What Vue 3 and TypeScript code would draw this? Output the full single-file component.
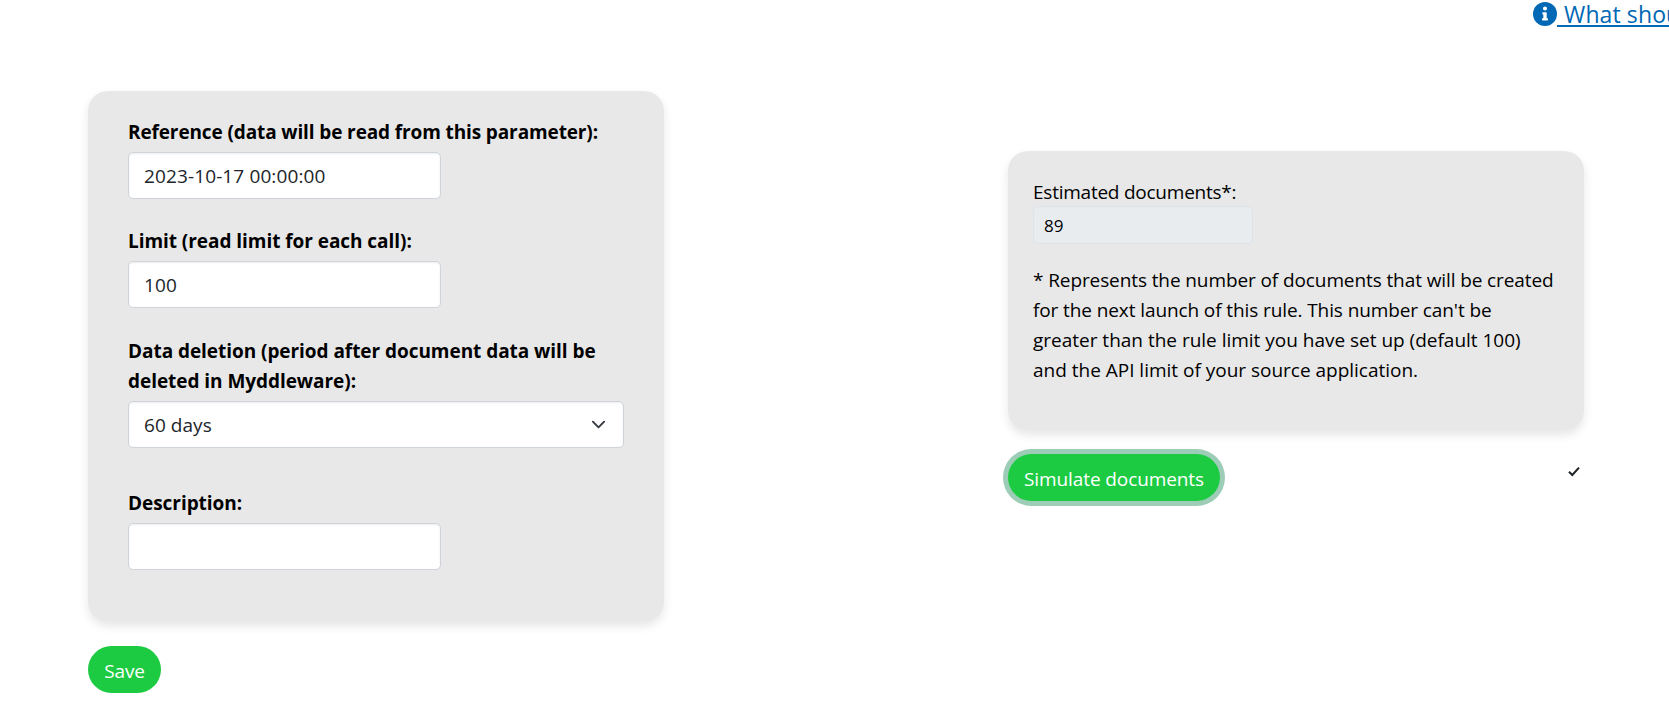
<script setup lang="ts">
import { ref } from 'vue'

const reference = ref('2023-10-17 00:00:00')
const limit = ref('100')
const period = ref('60 days')
const description = ref('')
const estimated = ref('89')
</script>

<template>
  <div class="page">
    <header class="help">
      <svg class="info" viewBox="0 0 512 512">
        <circle cx="256" cy="256" r="256" fill="#0068b4" />
        <path fill="#fff" d="M256 96a43 43 0 1 1 0 86 43 43 0 0 1 0-86zM200 230c0-7 5-12 12-12h68c7 0 12 5 12 12v114h16c7 0 12 5 12 12v24c0 7-5 12-12 12H204c-7 0-12-5-12-12v-24c0-7 5-12 12-12h16v-78h-8c-7 0-12-5-12-12z" />
      </svg>
      <a class="help-link"><span>&nbsp;What should</span></a>
    </header>
    <main class="columns">
      <section class="column">
        <form class="card params">
          <div class="field">
            <label class="ref-label">Reference (data will be read from this parameter):</label>
            <input v-model="reference" class="control" type="text" />
          </div>
          <div class="field">
            <label>Limit (read limit for each call):</label>
            <input v-model="limit" class="control" type="text" />
          </div>
          <div class="field wide">
            <label>Data deletion (period after document data will be<br />deleted in Myddleware):</label>
            <div class="control select">
              <span>{{ period }}</span>
              <svg viewBox="0 0 16 16" width="15" height="15"><path d="m2 5 6 6 6-6" fill="none" stroke="#343a40" stroke-width="2" stroke-linecap="round" stroke-linejoin="round" /></svg>
            </div>
          </div>
          <div class="field">
            <label>Description:</label>
            <input v-model="description" class="control" type="text" />
          </div>
        </form>
        <button class="btn save">Save</button>
      </section>
      <section class="column right">
        <div class="card estimate">
          <label>Estimated documents*:</label>
          <input class="readonly" :value="estimated" readonly />
          <p>* Represents the number of documents that will be created<br />for the next launch of this rule. This number can't be<br /><span class="loose">greater than the rule limit you have set up (default 100)<br />and the API limit of your source application.</span></p>
        </div>
        <div class="actions">
          <button class="btn simulate">Simulate documents</button>
          <svg class="check" viewBox="0 0 12 11"><path d="M1 5.8 4.3 9 11 1.6" fill="none" stroke="#212529" stroke-width="2.1" /></svg>
        </div>
      </section>
    </main>
  </div>
</template>

<style>
body {
  margin: 0;
  background: #fff;
}
</style>

<style scoped>
.page {
  box-sizing: border-box;
  width: 1669px;
  height: 723px;
  overflow: hidden;
  font-family: "Open Sans", "Noto Sans", sans-serif;
  font-size: 19px;
  line-height: 30px;
  letter-spacing: -0.2px;
  color: #000;
}
.help {
  display: flex;
  height: 91px;
  padding-left: 1533px;
  white-space: nowrap;
}
.info {
  flex: none;
  width: 24px;
  height: 24px;
  margin-top: 2px;
}
.help-link {
  height: 25px;
  font-size: 23px;
  line-height: 28px;
  letter-spacing: 0.1px;
  text-indent: 1px;
  color: #0068b4;
  border-bottom: 2px solid #0068b4;
}
.columns {
  display: flex;
  gap: 344px;
  padding-left: 88px;
}
.column {
  width: 576px;
}
.right {
  padding-top: 60px;
}
.card {
  box-sizing: border-box;
  border-radius: 20px;
  background: #e8e8e8;
  box-shadow: 0 5px 10px rgba(0, 0, 0, 0.1);
}
.params {
  height: 530px;
  padding: 26px 40px 0;
}
.field {
  height: 109px;
}
.field.wide {
  height: 153px;
  box-sizing: border-box;
  padding-top: 1px;
}
.field label {
  display: block;
  margin-bottom: 5px;
  font-weight: 700;
  letter-spacing: -0.05px;
  white-space: nowrap;
}
.field .ref-label {
  letter-spacing: -0.12px;
}
.control {
  display: block;
  box-sizing: border-box;
  width: 313px;
  height: 47px;
  padding: 0 15px;
  border: 1px solid #ced4da;
  border-radius: 5px;
  background: #fff;
  box-shadow: inset 0 1px 2px rgba(0, 0, 0, 0.075);
  font: inherit;
  letter-spacing: 0.12px;
  color: #212529;
}
.select {
  display: flex;
  align-items: center;
  justify-content: space-between;
  width: 496px;
  padding-right: 17px;
  letter-spacing: 0.05px;
}
.btn {
  height: 47px;
  padding: 2px 0 0;
  border: 0;
  border-radius: 24px;
  background: #1dcb43;
  color: #fff;
  font: inherit;
  letter-spacing: -0.1px;
  white-space: nowrap;
}
.save {
  width: 73px;
  margin-top: 25px;
}
.estimate {
  height: 279px;
  padding: 26px 25px 0;
}
.estimate label {
  display: block;
  height: 29px;
  letter-spacing: -0.24px;
}
.readonly {
  display: block;
  box-sizing: border-box;
  width: 220px;
  height: 38px;
  padding: 0 10px;
  border: 1px solid #dde3e9;
  border-radius: 5px;
  background: #e8ecef;
  font: inherit;
  font-size: 17px;
  color: #000;
}
.estimate p {
  margin: 21px 0 0;
  letter-spacing: -0.1px;
  white-space: nowrap;
}
.loose {
  letter-spacing: -0.01px;
}
.actions {
  display: flex;
  justify-content: space-between;
  padding: 24px 4px 0 0;
}
.simulate {
  width: 212px;
  box-shadow: 0 0 0 5px #9dccb7;
}
.check {
  width: 12px;
  height: 11px;
  margin-top: 12px;
}
</style>
